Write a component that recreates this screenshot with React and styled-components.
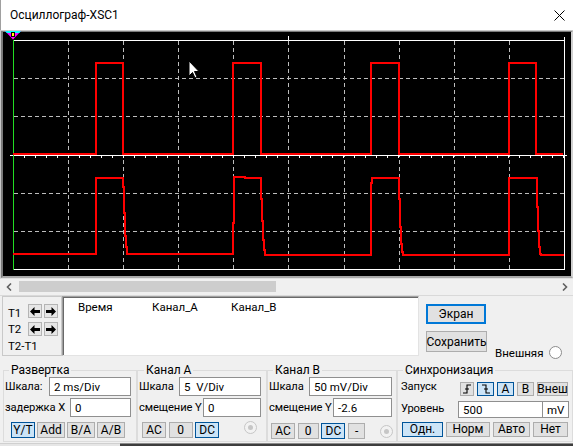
import React from 'react';
import styled, { createGlobalStyle } from 'styled-components';

const GlobalStyle = createGlobalStyle`
  html, body { margin: 0; padding: 0; background: #f0f0f0; }
  body {
    font-family: Roboto, "Liberation Sans", Arial, sans-serif;
    font-size: 11.5px;
    color: #000;
  }
  * { box-sizing: border-box; }
`;

const Window = styled.div`
  width: 573px;
  height: 446px;
  display: flex;
  flex-direction: column;
  background: #f0f0f0;
  overflow: hidden;
`;

const TitleBar = styled.div`
  flex: none;
  height: 30px;
  display: flex;
  align-items: center;
  justify-content: space-between;
  background: #fff;
  border-left: 1px solid #a0a0a0;
  padding: 0 8px 0 9px;
  font-size: 12px;
`;

const ScopeFrame = styled.div`
  flex: none;
  height: 249px;
  border-top: 1px solid #c8c8c8;
  border-left: 1px solid #c8c8c8;
  border-bottom: 1px solid #e0e0e0;
`;

const Bezel = styled.div`
  height: 100%;
  background: #000;
  border-top: 1px solid #7a7a7a;
  border-left: 2px solid #7a7a7a;
  border-right: 2px solid #d0d0d0;
  border-bottom: 2px solid #a8a8a8;
`;

const ScreenSvg = styled.svg`
  display: block;
  overflow: visible;
  position: relative;
`;

const ScrollBar = styled.div`
  flex: none;
  height: 16px;
  display: flex;
  align-items: flex-start;
  padding-top: 2px;
`;

const ScrollArrow = styled.div`
  flex: none;
  width: ${p => p.$w}px;
  height: 11px;
  display: flex;
  align-items: center;
  justify-content: center;
`;

const ScrollTrack = styled.div`
  flex: 1;
  height: 11px;
  padding-left: 2px;
`;

const ScrollThumb = styled.div`
  width: 257px;
  height: 11px;
  background: #cdcdcd;
`;

const CursorPanel = styled.div`
  flex: none;
  height: 62px;
  border-top: 1px solid #d9d9d9;
  display: flex;
  align-items: flex-start;
  padding-left: 2px;
`;

const CursorBox = styled.div`
  flex: none;
  width: 60px;
  height: 60px;
  border: 1px solid #c9c9c9;
  padding: 7px 0 0 5px;
`;

const CursorRow = styled.div`
  display: flex;
  align-items: center;
  gap: 2px;
  height: 14px;
  margin-top: ${p => p.$mt || 0}px;
`;

const CursorLabel = styled.span`
  width: 18px;
  line-height: 14px;
  padding-top: ${p => p.$pt || 0}px;
  white-space: nowrap;
`;

const DiffLabel = styled.div`
  margin-top: 3px;
  line-height: 14px;
`;

const ArrowBtn = styled.div`
  width: 14px;
  height: 14px;
  background: #e6e6e6;
  border: 1px solid #b4b4b4;
  display: flex;
  align-items: center;
  justify-content: center;
`;

const Table = styled.div`
  flex: none;
  width: 357px;
  height: 60px;
  background: #fff;
  border: 1px solid;
  border-color: #a0a0a0 #e3e3e3 #e3e3e3 #a0a0a0;
  box-shadow: inset 1px 1px 0 #696969;
  display: flex;
  align-items: flex-start;
  padding: 3px 0 0 15px;
  line-height: 14px;
`;

const ColHead = styled.span`
  width: ${p => p.$w}px;
  white-space: nowrap;
`;

const SideButtons = styled.div`
  flex: none;
  display: flex;
  flex-direction: column;
  gap: 7px;
  margin-left: 7px;
  padding-top: 8px;
`;

const PanelBtn = styled.button`
  width: ${p => p.$w}px;
  height: ${p => p.$h}px;
  padding: 0;
  font: inherit;
  font-size: 12px;
  color: #000;
  background: #e1e1e1;
  border: ${p => (p.$focus ? '2px solid #0078d7' : '1px solid #adadad')};
  display: flex;
  align-items: center;
  justify-content: center;
  white-space: nowrap;
`;

const ExtRow = styled.div`
  align-self: flex-end;
  margin: 0 0 -2px 8px;
  display: flex;
  align-items: center;
  gap: 6px;
  height: 13px;
  white-space: nowrap;
`;

const Radio = styled.span`
  flex: none;
  width: 13px;
  height: 13px;
  border-radius: 50%;
  background: ${p => (p.$disabled ? '#f2f2f2' : '#fff')};
  border: 1px solid ${p => (p.$disabled ? '#c6c6c6' : '#8c8c8c')};
  display: flex;
  align-items: center;
  justify-content: center;
  align-self: ${p => p.$self || 'auto'};
  margin: ${p => p.$m || '0'};
  &::after {
    content: '';
    display: ${p => (p.$disabled ? 'block' : 'none')};
    width: 5px;
    height: 5px;
    border-radius: 50%;
    background: #c6c6c6;
  }
`;

const ControlPanel = styled.div`
  flex: none;
  height: 86px;
  display: flex;
  align-items: flex-start;
  padding-top: 6px;
`;

const Group = styled.fieldset`
  flex: none;
  margin: 0 0 0 ${p => p.$ml || 0}px;
  padding: 0;
  min-width: 0;
  width: ${p => p.$w}px;
  height: 79px;
  border: 1px solid #dcdcdc;
`;

const Legend = styled.legend`
  margin-left: ${p => p.$ml}px;
  padding: 0 2px;
  font-size: 12px;
  line-height: 14px;
`;

const GroupBody = styled.div`
  display: flex;
  flex-direction: column;
  padding: 0 ${p => p.$pr}px 0 ${p => p.$pl}px;
`;

const Row = styled.div`
  display: flex;
  align-items: center;
  height: 19px;
  margin-top: ${p => p.$mt || 0}px;
  white-space: nowrap;
`;

const Label = styled.span`
  font-size: 11.2px;
  letter-spacing: -0.1px;
`;

const Field = styled.div`
  flex: none;
  margin-left: ${p => (p.$inline ? '0' : 'auto')};
  width: ${p => p.$w}px;
  height: ${p => p.$h || 19}px;
  background: #fff;
  border: 1px solid #8f8f8f;
  border-left-width: ${p => (p.$joined ? 0 : 1)}px;
  padding-left: 4px;
  display: flex;
  align-items: center;
  white-space: pre;
`;

const FieldPair = styled.div`
  display: flex;
  margin-left: auto;
  align-self: flex-end;
`;

const ButtonRow = styled.div`
  display: flex;
  align-items: center;
  gap: ${p => p.$gap}px;
  height: 16px;
  margin-top: ${p => p.$mt}px;
  margin-left: ${p => p.$ml || 0}px;
`;

const EdgeGroup = styled.div`
  display: flex;
  gap: 3px;
  margin-left: auto;
  margin-right: 1px;
  align-self: flex-end;
`;

const Btn = styled.button`
  flex: none;
  width: ${p => p.$w}px;
  height: ${p => p.$h || 16}px;
  padding: 0;
  font: inherit;
  font-size: 12px;
  color: #000;
  background: ${p => (p.$active ? '#cce4f7' : '#e1e1e1')};
  border: 1px solid ${p => (p.$active ? '#005499' : '#adadad')};
  display: flex;
  align-items: center;
  justify-content: center;
  white-space: nowrap;
`;

const BottomStrip = styled.div`
  flex: none;
  height: 3px;
  display: flex;
`;

const StripLight = styled.div`
  width: 120px;
  background: #e6e6e6;
  border-top: 1px solid #d0d0d0;
`;

const StripDark = styled.div`
  flex: 1;
  background: #3d3d3d;
  border-top: 1px solid #8a8a8a;
`;

const GRID_X = [68.5, 123.5, 178.5, 233.5, 288.5, 344.5, 399.5, 454.5, 509.5];
const GRID_Y = [78.5, 116.5, 193.5, 231.5];
const TICKS = Array.from({ length: 50 }, (_, i) => 13.5 + 11 * (i + 1)).filter(x => x < 564);

const CH_A =
  'M13 154 H96 V63 H123 V154 H233 V63 H261 V154 H371 V63 H399 V154 H509 V63 H536 V154 H563';
const CH_B =
  'M13 254 H96 V178 H123 V187 H124 V213 H125 V236 H126 V247 H127 V254 H233 V223 H234 V177 H245 V178 H261 V199 H262 V221 H263 V240 H264 V250 H265 V255 ' +
  'H371 V183 H372 V178 H399 V199 H400 V227 H401 V244 H402 V252 H403 V255 H509 V178 H537 V207 H538 V231 H539 V247 H540 V254 H541 V255 H564';

function ScopeScreen() {
  return (
    <ScreenSvg width="568" height="244" viewBox="0 0 568 244">
      <g transform="translate(-3 -32)">
        {GRID_X.map(x => (
          <line key={'gx' + x} x1={x} y1={41} x2={x} y2={269} stroke="#bdbdbd" strokeDasharray="4 3" />
        ))}
        {GRID_Y.map(y => (
          <line key={'gy' + y} x1={14} y1={y} x2={564} y2={y} stroke="#bdbdbd" strokeDasharray="4 3" />
        ))}
        <path d="M13 40.5 H565 M564.5 37 V270 M13 269.5 H565" stroke="#fff" fill="none" />
        <line x1="288.5" y1="36" x2="288.5" y2="40" stroke="#fff" />
        <line x1="10" y1="155.5" x2="567" y2="155.5" stroke="#fff" />
        {TICKS.map(x => (
          <line key={'t' + x} x1={x} y1={155} x2={x} y2={158} stroke="#fff" />
        ))}
        <line x1="13.5" y1="40" x2="13.5" y2="270" stroke="#22dd22" />
        <path d={CH_A} stroke="#ff0000" strokeWidth="2" fill="none" shapeRendering="crispEdges" />
        <path d={CH_B} stroke="#ff0000" strokeWidth="2" fill="none" shapeRendering="crispEdges" />
        <polygon points="5,31 21,31 13,39.5" fill="#ff00ff" />
        <polygon points="5,31 21,31 19.2,33 6.8,33" fill="#00ffff" />
        <rect x="11.5" y="32.5" width="3" height="4" fill="#ffff00" stroke="#000" strokeWidth="1" />
        <polygon
          points="189,61 189,76 192.5,72.5 195,78 197,77 194.5,71.5 199,71.5"
          fill="#fff"
          stroke="#000"
          strokeWidth="1"
        />
      </g>
    </ScreenSvg>
  );
}

const LeftArrowIcon = () => (
  <svg width="10" height="9" viewBox="0 0 10 9">
    <polygon points="0,4.5 4.5,0 4.5,3 10,3 10,6 4.5,6 4.5,9" fill="#000" />
  </svg>
);
const RightArrowIcon = () => (
  <svg width="10" height="9" viewBox="0 0 10 9">
    <polygon points="10,4.5 5.5,0 5.5,3 0,3 0,6 5.5,6 5.5,9" fill="#000" />
  </svg>
);

const Chevron = ({ dir }) => (
  <svg width="6" height="8" viewBox="0 0 6 8">
    <path
      d={dir === 'left' ? 'M5 0.5 L1.5 4 L5 7.5' : 'M1 0.5 L4.5 4 L1 7.5'}
      stroke="#606060"
      strokeWidth="1.6"
      fill="none"
    />
  </svg>
);

const EdgeIcon = ({ rising }) => (
  <svg width="10" height="10" viewBox="0 0 10 10">
    <path
      d={rising ? 'M1 9 H5 V1 H9 M3 5 H7' : 'M1 1 H5 V9 H9 M3 5 H7'}
      stroke="#000"
      strokeWidth="1.1"
      fill="none"
    />
  </svg>
);

const CloseIcon = () => (
  <svg width="11" height="11" viewBox="0 0 11 11">
    <path d="M0.5 0.5 L10.5 10.5 M10.5 0.5 L0.5 10.5" stroke="#000" strokeWidth="1" />
  </svg>
);

export default function App() {
  return (
    <>
      <GlobalStyle />
      <Window>
        <TitleBar>
          <span>Осциллограф-XSC1</span>
          <CloseIcon />
        </TitleBar>

        <ScopeFrame>
          <Bezel>
            <ScopeScreen />
          </Bezel>
        </ScopeFrame>

        <ScrollBar>
          <ScrollArrow $w={17}>
            <Chevron dir="left" />
          </ScrollArrow>
          <ScrollTrack>
            <ScrollThumb />
          </ScrollTrack>
          <ScrollArrow $w={16}>
            <Chevron dir="right" />
          </ScrollArrow>
        </ScrollBar>

        <CursorPanel>
          <CursorBox>
            <CursorRow>
              <CursorLabel $pt={3}>T1</CursorLabel>
              <ArrowBtn>
                <LeftArrowIcon />
              </ArrowBtn>
              <ArrowBtn>
                <RightArrowIcon />
              </ArrowBtn>
            </CursorRow>
            <CursorRow $mt={4}>
              <CursorLabel>T2</CursorLabel>
              <ArrowBtn>
                <LeftArrowIcon />
              </ArrowBtn>
              <ArrowBtn>
                <RightArrowIcon />
              </ArrowBtn>
            </CursorRow>
            <DiffLabel>T2-T1</DiffLabel>
          </CursorBox>
          <Table>
            <ColHead $w={74}>Время</ColHead>
            <ColHead $w={79}>Канал_A</ColHead>
            <ColHead $w={80}>Канал_B</ColHead>
          </Table>
          <SideButtons>
            <PanelBtn $w={60} $h={20} $focus>
              Экран
            </PanelBtn>
            <PanelBtn $w={61} $h={21}>
              Сохранить
            </PanelBtn>
          </SideButtons>
          <ExtRow>
            <span>Внешняя</span>
            <Radio />
          </ExtRow>
        </CursorPanel>

        <ControlPanel>
          <Group $ml={3} $w={134}>
            <Legend $ml={5}>Развертка</Legend>
            <GroupBody $pl={1} $pr={5}>
              <Row>
                <Label>Шкала:</Label>
                <Field $w={82}>2 ms/Div</Field>
              </Row>
              <Row $mt={2}>
                <Label>задержка X</Label>
                <Field $w={61}>0</Field>
              </Row>
              <ButtonRow $mt={5} $ml={6} $gap={2}>
                <Btn $w={24} $active>
                  Y/T
                </Btn>
                <Btn $w={28}>Add</Btn>
                <Btn $w={28}>B/A</Btn>
                <Btn $w={28}>A/B</Btn>
              </ButtonRow>
            </GroupBody>
          </Group>

          <Group $w={130}>
            <Legend $ml={6}>Канал A</Legend>
            <GroupBody $pl={1} $pr={5}>
              <Row>
                <Label>Шкала</Label>
                <Field $w={82}>5  V/Div</Field>
              </Row>
              <Row $mt={2}>
                <Label>смещение Y</Label>
                <Field $w={58}>0</Field>
              </Row>
              <ButtonRow $mt={5} $ml={3} $gap={2.6}>
                <Btn $w={24}>AC</Btn>
                <Btn $w={24}>0</Btn>
                <Btn $w={24} $active>
                  DC
                </Btn>
                <Radio $disabled $self="flex-start" $m="-1px 4.5px 0 auto" />
              </ButtonRow>
            </GroupBody>
          </Group>

          <Group $w={130}>
            <Legend $ml={5}>Канал B</Legend>
            <GroupBody $pl={1} $pr={4}>
              <Row>
                <Label>Шкала</Label>
                <Field $w={83}>50 mV/Div</Field>
              </Row>
              <Row $mt={2}>
                <Label>смещение Y</Label>
                <Field $w={59}>-2.6</Field>
              </Row>
              <ButtonRow $mt={6} $ml={2} $gap={2.7}>
                <Btn $w={24}>AC</Btn>
                <Btn $w={21}>0</Btn>
                <Btn $w={24} $active>
                  DC
                </Btn>
                <Btn $w={17}>-</Btn>
                <Radio $disabled $m="0 -1px 0 auto" />
              </ButtonRow>
            </GroupBody>
          </Group>

          <Group $w={176}>
            <Legend $ml={5}>Синхронизация</Legend>
            <GroupBody $pl={3} $pr={3}>
              <Row>
                <Label>Запуск</Label>
                <EdgeGroup>
                  <Btn $w={14} $h={14}>
                    <EdgeIcon rising />
                  </Btn>
                  <Btn $w={17} $h={14} $active>
                    <EdgeIcon />
                  </Btn>
                  <Btn $w={17} $h={14} $active>
                    A
                  </Btn>
                  <Btn $w={17} $h={14}>
                    B
                  </Btn>
                  <Btn $w={31} $h={14}>
                    Внеш
                  </Btn>
                </EdgeGroup>
              </Row>
              <Row $mt={3}>
                <Label>Уровень</Label>
                <FieldPair>
                  <Field $inline $w={85} $h={17}>
                    500
                  </Field>
                  <Field $inline $joined $w={26} $h={17}>
                    mV
                  </Field>
                </FieldPair>
              </Row>
              <ButtonRow $mt={3} $ml={1} $gap={3}>
                <Btn $w={41} $h={15} $active>
                  Одн.
                </Btn>
                <Btn $w={44} $h={15}>
                  Норм
                </Btn>
                <Btn $w={37} $h={15}>
                  Авто
                </Btn>
                <Btn $w={35} $h={15}>
                  Нет
                </Btn>
              </ButtonRow>
            </GroupBody>
          </Group>
        </ControlPanel>

        <BottomStrip>
          <StripLight />
          <StripDark />
        </BottomStrip>
      </Window>
    </>
  );
}
